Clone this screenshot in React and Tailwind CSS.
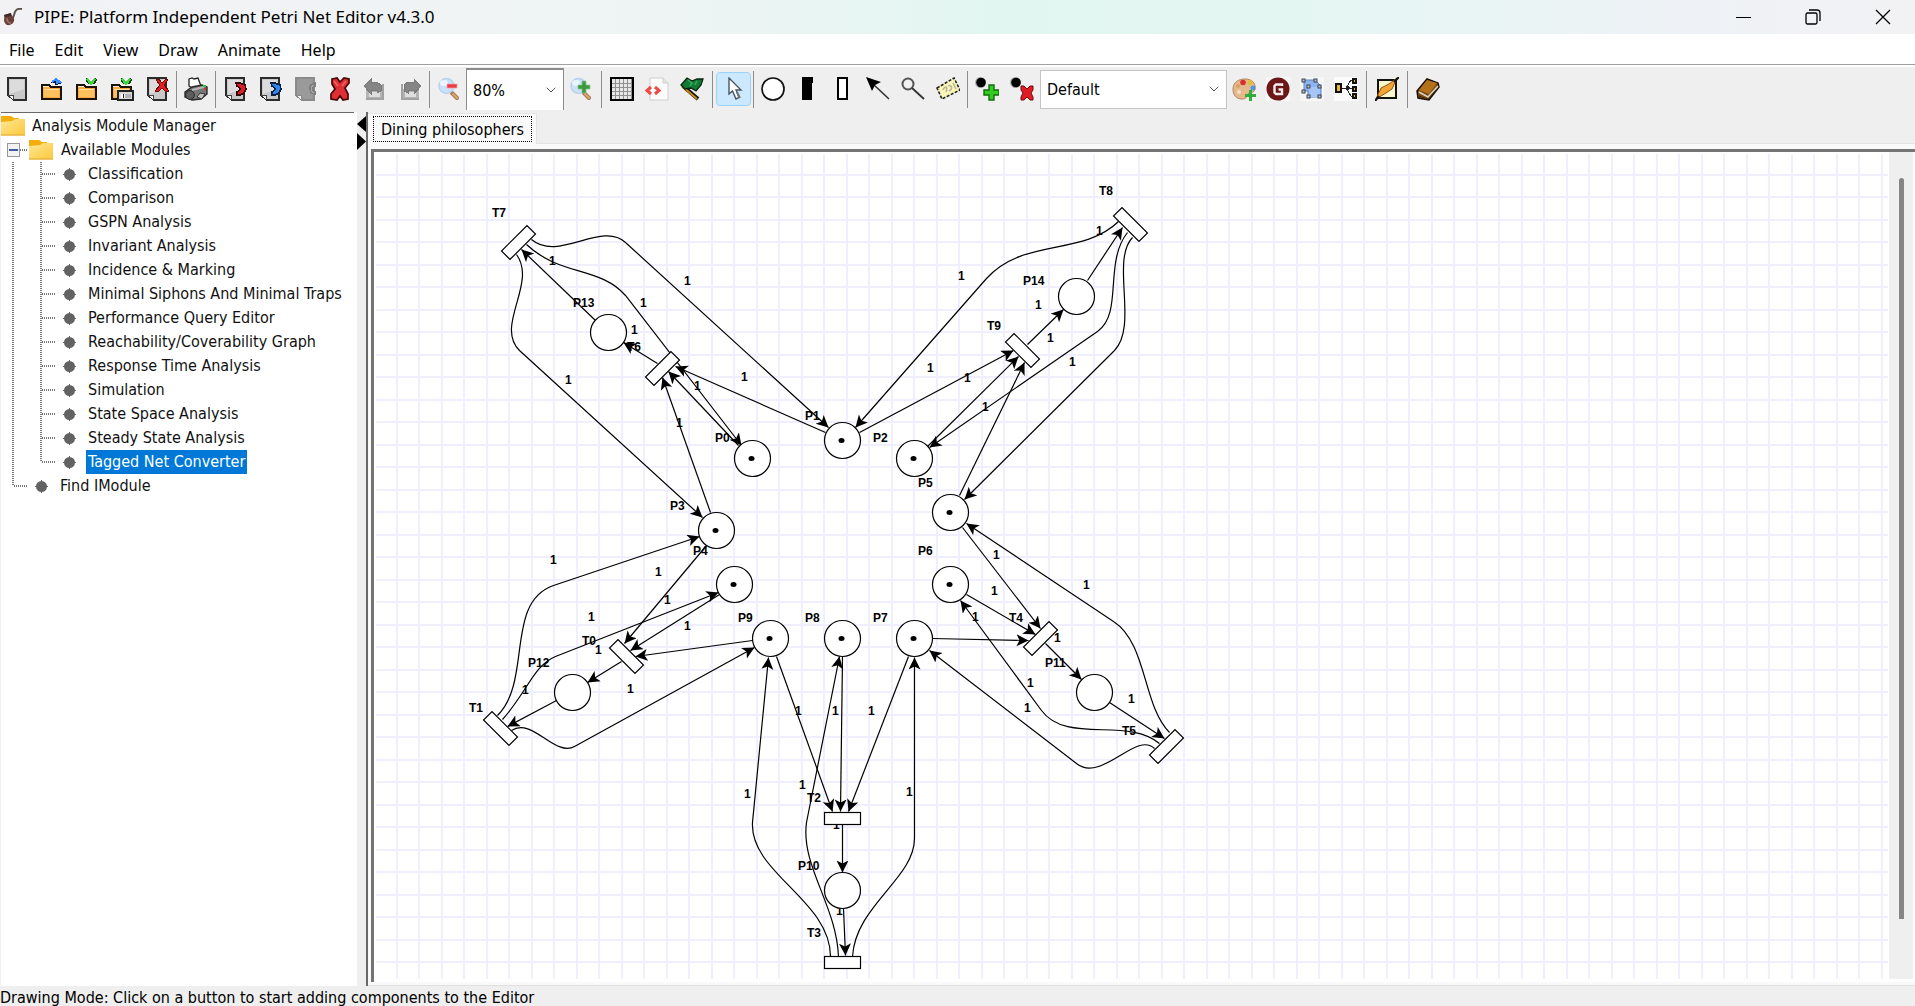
import React from "react";
import { ChevronDown } from "lucide-react";

/* ---------- toolbar icons, all on a 24 x 24 grid ---------- */

function Icon({ children, pixel }) {
  return (
    <svg viewBox="0 0 24 24" className="h-6 w-6" fill="none" shapeRendering={pixel ? "crispEdges" : "auto"} aria-hidden="true">
      {children}
    </svg>
  );
}

const Sheet = ({ disabled }) => (
  <>
    <path d="M3 1H21V23H9L3 18Z" fill={disabled ? "#9a9a9a" : "#c9c9c9"} stroke={disabled ? "#8a8a8a" : "#2c2c2c"} strokeWidth="2" />
    {!disabled && <path d="M5 3H19V12L5 17Z" fill="#dcdcdc" />}
    <path d="M3 18H8V23" fill="#f4f4f4" stroke={disabled ? "#8a8a8a" : "#444"} />
  </>
);

const Folder = () => (
  <>
    <path d="M2 22V8H9L11 10H21V22Z" fill="#f9ab3e" stroke="#1c1208" strokeWidth="2" />
    <path d="M4 12H19V20H4Z" fill="#fcc05f" />
    <path d="M3 9H8L9 10H3Z" fill="#fff3dd" />
    <path d="M4 12H19" stroke="#ffe0a8" />
  </>
);

const DownArrow = () => (
  <>
    <path d="M11 1L15 4H17L21 1L22 3L20 7H18L16 8L13 7L11 4Z" fill="#1d3c1d" />
    <path d="M12 2L15 5H17L20 2M14 5L16 7L18 5" stroke="#3ed63e" strokeWidth="1.5" />
  </>
);

const NewIcon = () => (<Icon pixel><Sheet /></Icon>);
const OpenIcon = () => (
  <Icon pixel>
    <Folder />
    <path d="M10 6L14 3L16 1L19 3L22 6L20 7H18V8H15V6Z" fill="#0c1c3c" />
    <path d="M12 5L16 2L20 5H17V7" stroke="#3a8cff" strokeWidth="2" />
  </Icon>
);
const SaveIcon = () => (<Icon pixel><Folder /><DownArrow /></Icon>);
const SaveAsIcon = () => (
  <Icon pixel>
    <Folder /><DownArrow />
    <path d="M8 14H23V23H8Z" fill="#d8d8d8" stroke="#222" strokeWidth="2" />
    <path d="M11 17H20V21H11Z" fill="#fff" />
    <path d="M13 17V21" stroke="#222" />
    <path d="M15 17H21V21H15Z" fill="#b4b4b4" />
  </Icon>
);
const CloseIcon = () => (
  <Icon pixel>
    <Sheet />
    <path d="M11 3L14 2L17 6L21 2L23 3L19 8L24 14L21 15L17 11L13 15L10 14L15 8Z" fill="#e02020" stroke="#6d0808" />
  </Icon>
);
const PrintIcon = () => (
  <Icon>
    <path d="M5 2L8 1L10 2L14 1L17 9L9 12L5 9Z" fill="#fff" stroke="#222" strokeWidth="1.3" />
    <path d="M1 15L8 10L18 8L23 10V17L17 22L8 23L1 20Z" fill="#777" stroke="#2a2a2a" strokeWidth="1.4" />
    <circle cx="6" cy="18" r="4.4" fill="#5c5c5c" stroke="#2a2a2a" />
    <path d="M8 13L20 10" stroke="#b5b5b5" strokeWidth="2" />
    <path d="M13 20L16 16L21 17L18 22Z" fill="#c2c2c2" stroke="#333" />
    <rect x="19" y="8" width="3" height="2" fill="#3fbf3f" />
    <rect x="20" y="11" width="2" height="2" fill="#d03a2a" />
  </Icon>
);
const CopyIcon = ({ color, dark }) => (
  <Icon pixel>
    <Sheet />
    <path d="M13 6H17L19 7L22 8L23 12L21 16L17 18H14V15L17 13V11L14 9Z" fill={color} stroke={dark} strokeWidth="1.4" />
  </Icon>
);
const PasteIcon = () => (
  <Icon pixel>
    <Sheet disabled />
    <path d="M23 5L17 7L16 12L18 17L23 18V14L20 12L23 9Z" fill="#7e7e7e" />
    <path d="M21 8L18 10V14L21 16" stroke="#a5a5a5" />
  </Icon>
);
const DeleteIcon = () => (
  <Icon>
    <path d="M4 2L9 1L12 5L16 1L21 2L21 6L17 11L20 17V22L15 23L12 19L9 23L3 22V17L7 12L4 7Z" fill="#dc2f36" stroke="#4c0507" strokeWidth="1.7" />
    <path d="M6 4L10 9M18 4L14 9" stroke="#f0656b" strokeWidth="1.4" />
  </Icon>
);
const Bend = () => (
  <>
    <path d="M3 12H21V23H3Z" fill="#b4b4b4" />
    <path d="M6 15H17V20H6Z" fill="#dedede" />
    <path d="M20 7V22H3" stroke="#a2a2a2" strokeWidth="1.6" />
    <path d="M1 9L8 2V5H14L18 8V14L14 16V13H8V17Z" fill="#858585" stroke="#7a7a7a" />
  </>
);
const UndoIcon = () => (<Icon pixel><Bend /></Icon>);
const RedoIcon = () => (<Icon pixel><g transform="matrix(-1 0 0 1 24 0)"><Bend /></g></Icon>);
const ZoomIcon = ({ plus }) => (
  <Icon>
    <path d="M15 16L20 21" stroke="#a5764a" strokeWidth="4" strokeLinecap="round" />
    <path d="M16 17L20 21" stroke="#d9a36c" strokeWidth="2.400" strokeLinecap="round" />
    <circle cx="9.500" cy="9" r="7.500" fill="#c9e2f8" stroke="#b6d2ee" strokeWidth="1.400" />
    <ellipse cx="7" cy="6" rx="4" ry="3" fill="#e9f5fe" />
    {plus
      ? <path d="M13 4H17V8H21V12H17V16H13V12H9V8H13Z" fill="#3c9a3c" stroke="#8cc48c" strokeWidth=".7" />
      : <path d="M10 7H20V11H10Z" fill="#ee3c46" stroke="#f5a0a4" strokeWidth=".7" />}
  </Icon>
);
const GridIcon = () => (
  <Icon pixel>
    <rect x="1" y="1" width="22" height="22" fill="#e8e8e8" stroke="#000" strokeWidth="2" />
    <path d="M5 2V22M9 2V22M13 2V22M17 2V22M21 2V22M2 6H22M2 10H22M2 14H22M2 18H22" stroke="#8f8f8f" />
  </Icon>
);
const CodeIcon = () => (
  <Icon>
    <path d="M5 1H18L23 6V23H5Z" fill="#fbfbfb" stroke="#cfcfcf" />
    <path d="M18 1V6H23" fill="#e5e5e5" stroke="#cfcfcf" />
    <path d="M6 10L2 13.500L6 17M10 10L14 13.500L10 17" stroke="#ee4a42" strokeWidth="3" />
  </Icon>
);
const FlagIcon = () => (
  <Icon>
    <path d="M3 9L18 22" stroke="#1a1205" strokeWidth="4" />
    <path d="M2 9L17 22" stroke="#c98a1d" strokeWidth="1.800" />
    <path d="M1 8L7 1L12 4L17 2L23 2L21 8L16 14L11 11L5 12Z" fill="#137a35" stroke="#08260f" strokeWidth="1.300" />
    <path d="M8 3L12 6L10 9M17 4L15 8" stroke="#35ad5b" strokeWidth="1.500" />
  </Icon>
);
const PointerIcon = () => (
  <Icon>
    <path d="M7 1V17L10.500 14L14 22L17 20.500L14 13H19Z" fill="#fff" stroke="#4a5560" strokeWidth="1.400" />
    <path d="M15 15L18 21" stroke="#6d7780" strokeWidth="2" />
  </Icon>
);
const PlaceIcon = () => (<Icon><circle cx="12" cy="12" r="11" fill="#fff" stroke="#111" strokeWidth="1.700" /></Icon>);
const TimedIcon = () => (<Icon pixel><path d="M6 0H17V6H16V23H6Z" fill="#000" /></Icon>);
const ImmediateIcon = () => (<Icon pixel><path d="M7 1H16V22H7Z" fill="#fff" stroke="#000" strokeWidth="2" /></Icon>);
const ArcIcon = () => (<Icon><path d="M7 7L23 22" stroke="#333" strokeWidth="1.600" /><path d="M0 0L15 5L9 8L6 14Z" fill="#000" /></Icon>);
const InhibitorIcon = () => (<Icon><circle cx="7" cy="7" r="5.500" fill="#f2f2f2" stroke="#555" strokeWidth="2" /><path d="M11 11L23 22" stroke="#333" strokeWidth="1.800" /></Icon>);
const NoteIcon = () => (
  <Icon>
    <path d="M1 11L18 1L24 13L6 22Z" fill="#fbf7b8" stroke="#222" strokeWidth="1.600" strokeDasharray="3 1.500" />
    <path d="M7 13C9 8 12 10 10 15M12 9C16 7 17 12 13 14M17 6L20 12" stroke="#b9b59a" strokeWidth="1.600" />
  </Icon>
);
const TokenIcon = ({ remove }) => (
  <Icon>
    <circle cx="5.500" cy="5.500" r="5.500" fill="#b0b0b0" /><circle cx="6" cy="5.500" r="4.800" fill="#000" />
    {remove
      ? <path d="M11 9L14 9L17 12L20 9H23V13L21 16L23 20V23H20L17 20L14 23H11V20L13 16L11 13Z" fill="#e01c24" stroke="#76080c" />
      : <path d="M14 8H19V13H24V18H19V23H14V18H9V13H14Z" fill="#35cc22" stroke="#136d0c" strokeWidth="1.400" />}
  </Icon>
);
const PaletteIcon = () => (
  <Icon>
    <path d="M1 12C1 5 7 2 13 2C20 2 24 6 23 12C22 17 18 14 16 17C14 20 15 22 10 22C4 22 1 18 1 12Z" fill="#e6b98c" stroke="#b58558" />
    <circle cx="11" cy="5.500" r="2.800" fill="#d6302c" /><circle cx="18" cy="5.500" r="2.500" fill="#d9c23a" />
    <circle cx="21" cy="11" r="2.500" fill="#4f97dc" /><circle cx="6" cy="9" r="2" fill="#d89f6c" /><circle cx="7" cy="15" r="2" fill="#f5dfc6" />
    <path d="M17 13H20V17H24V20H20V24H17V20H13V17H17Z" fill="#2fae3c" />
  </Icon>
);
const GroupIcon = () => (
  <Icon>
    <rect width="24" height="24" fill="#f7f7f7" />
    <circle cx="12" cy="12" r="11.500" fill="#6b1717" />
    <path d="M16 9V7.500H10L8.500 9V15.500L10 17H16V12.500H12.500" stroke="#f7eded" strokeWidth="2.400" />
  </Icon>
);
const SelectionIcon = () => (
  <Icon>
    <rect width="24" height="24" fill="#f6f6f6" />
    <path d="M4 3H15L21 9V20H8V14H4Z" fill="#8db4f0" stroke="#5f87c8" />
    <path d="M9 10H20V20H9Z" fill="#a6c6f7" />
    <g fill="#b9c0c9" stroke="#3b434d"><rect x="2" y="2" width="3" height="3" /><rect x="14" y="2" width="3" height="3" /><rect x="2" y="13" width="3" height="3" /><rect x="7" y="8" width="3" height="3" /><rect x="18" y="8" width="3" height="3" /><rect x="7" y="18" width="3" height="3" /><rect x="18" y="18" width="3" height="3" /></g>
  </Icon>
);
const HierarchyIcon = () => (
  <Icon pixel>
    <rect width="24" height="24" fill="#fbfbfb" />
    <path d="M7 11H14M19 3H17L12 11L17 19H19M14 11H19" stroke="#222" />
    <path d="M13 8L17 11L13 14Z" fill="#222" />
    <g fill="#f5b534" stroke="#111" strokeWidth="1.500"><rect x="2" y="7" width="5" height="8" /><rect x="19" y="2" width="3" height="4" /><rect x="19" y="10" width="3" height="4" /><rect x="19" y="17" width="3" height="4" /></g>
  </Icon>
);
const AnimateIcon = () => (
  <Icon>
    <rect x="3" y="3" width="18" height="18" fill="#fbf6cf" stroke="#111" strokeWidth="2" />
    <path d="M1 22L6 11L14 7L22 1L17 12L11 16Z" fill="#f3a233" stroke="#8d5710" />
    <path d="M0 24L4 19M19 5L24 0" stroke="#111" strokeWidth="2.200" />
  </Icon>
);
const BookIcon = () => (
  <Icon>
    <path d="M1 14L11 2L22 6L23 10L13 23L2 21Z" fill="#7d4a10" stroke="#1c1004" strokeWidth="1.500" />
    <path d="M3 13L11 3L21 6L13 17Z" fill="#b5701a" />
    <path d="M3 15L12 20L22 9" stroke="#d9d4ca" strokeWidth="1.600" />
    <path d="M3 19L12 22L22 11" stroke="#3a2a14" />
  </Icon>
);

/* ---------- toolbar ---------- */

function Tool({ label, active, children }) {
  return (
    <button
      type="button"
      aria-label={label}
      title={label}
      className={
        active
          ? "flex h-[34px] w-[35px] shrink-0 items-center justify-center rounded-sm border border-[#99d1ff] bg-[#cce8ff]"
          : "flex h-[34px] w-[34px] shrink-0 items-center justify-center"
      }
    >
      {children}
    </button>
  );
}

const Group = ({ children }) => <div className="flex shrink-0 items-center gap-px">{children}</div>;
const Sep = ({ wide }) => (
  <div className={wide ? "mx-[3px] h-[37px] w-px shrink-0 bg-[#8c8c8c]" : "mx-0.5 h-[37px] w-px shrink-0 bg-[#8c8c8c]"} />
);

function Combo({ label, value, className }) {
  return (
    <label className={className}>
      <select aria-label={label} className="h-full w-full appearance-none bg-transparent pt-0.5 pl-1.5 text-base outline-none" defaultValue={value}>
        <option>{value}</option>
      </select>
      <ChevronDown className="pointer-events-none -ml-5 h-4 w-4 shrink-0 text-[#555]" strokeWidth={1.5} />
    </label>
  );
}

function Toolbar() {
  return (
    <div className="flex h-[45px] shrink-0 items-center pb-px">
      <Group>
        <Tool label="New"><NewIcon /></Tool>
        <Tool label="Open"><OpenIcon /></Tool>
        <Tool label="Save"><SaveIcon /></Tool>
        <Tool label="Save as"><SaveAsIcon /></Tool>
        <Tool label="Close"><CloseIcon /></Tool>
      </Group>
      <Sep />
      <Tool label="Print"><PrintIcon /></Tool>
      <Sep />
      <Group>
        <Tool label="Cut"><CopyIcon color="#d91f26" dark="#3a0507" /></Tool>
        <Tool label="Copy"><CopyIcon color="#2f86ee" dark="#0a1f44" /></Tool>
        <Tool label="Paste"><PasteIcon /></Tool>
        <Tool label="Delete"><DeleteIcon /></Tool>
        <Tool label="Undo"><UndoIcon /></Tool>
        <Tool label="Redo"><RedoIcon /></Tool>
      </Group>
      <Sep />
      <Tool label="Zoom out"><ZoomIcon /></Tool>
      <Combo label="Zoom" value="80%" className="flex h-[42px] w-[98px] shrink-0 items-center border border-t-2 border-b-0 border-[#8c8c8c] bg-white" />
      <Tool label="Zoom in"><ZoomIcon plus /></Tool>
      <Sep wide />
      <Group>
        <Tool label="Toggle grid"><GridIcon /></Tool>
        <Tool label="Export"><CodeIcon /></Tool>
        <Tool label="Animation mode"><FlagIcon /></Tool>
      </Group>
      <Sep wide />
      <Tool label="Select" active><PointerIcon /></Tool>
      <Sep />
      <Group>
        <Tool label="Place"><PlaceIcon /></Tool>
        <Tool label="Timed transition"><TimedIcon /></Tool>
        <Tool label="Immediate transition"><ImmediateIcon /></Tool>
        <Tool label="Arc"><ArcIcon /></Tool>
        <Tool label="Inhibitor arc"><InhibitorIcon /></Tool>
        <Tool label="Annotation"><NoteIcon /></Tool>
      </Group>
      <Sep />
      <Group>
        <Tool label="Add token"><TokenIcon /></Tool>
        <Tool label="Delete token"><TokenIcon remove /></Tool>
        <Combo label="Token class" value="Default" className="flex h-[39px] w-[187px] shrink-0 items-center border border-[#c4c4c4] bg-white" />
      </Group>
      <div className="flex shrink-0">
        <Tool label="Specify tokens"><PaletteIcon /></Tool>
        <Tool label="Group transitions"><GroupIcon /></Tool>
        <Tool label="Unfold"><SelectionIcon /></Tool>
        <Tool label="Hierarchy"><HierarchyIcon /></Tool>
      </div>
      <Sep wide />
      <Tool label="Rate editor"><AnimateIcon /></Tool>
      <Sep wide />
      <Tool label="Help"><BookIcon /></Tool>
    </div>
  );
}

/* ---------- module tree ---------- */

const modules = [
  "Classification", "Comparison", "GSPN Analysis", "Invariant Analysis", "Incidence & Marking",
  "Minimal Siphons And Minimal Traps", "Performance Query Editor", "Reachability/Coverability Graph",
  "Response Time Analysis", "Simulation", "State Space Analysis", "Steady State Analysis", "Tagged Net Converter",
];

const VLine = ({ half }) => (
  <span className={half
    ? "h-3 w-0.5 shrink-0 self-start bg-[repeating-linear-gradient(180deg,#777_0_1px,transparent_1px_2px)]"
    : "h-6 w-0.5 shrink-0 bg-[repeating-linear-gradient(180deg,#777_0_1px,transparent_1px_2px)]"} />
);
const HLine = ({ short }) => (
  <span className={short
    ? "h-0.5 w-2 shrink-0 bg-[repeating-linear-gradient(90deg,#777_0_1px,transparent_1px_2px)]"
    : "h-0.5 w-3.5 shrink-0 bg-[repeating-linear-gradient(90deg,#777_0_1px,transparent_1px_2px)]"} />
);
const FolderIcon = () => (
  <svg viewBox="0 0 24 20" className="h-5 w-6 shrink-0" aria-hidden="true">
    <defs>
      <linearGradient id="folder" x1="0" y1="0" x2="1" y2="1">
        <stop offset="0" stopColor="#ffe694" /><stop offset="1" stopColor="#fbc93d" />
      </linearGradient>
    </defs>
    <path d="M0 0H10L13 2H18V8H0Z" fill="#f4ad0b" />
    <path d="M0 6L11 5L14 3H24V19H0Z" fill="url(#folder)" />
    <path d="M0 19H24" stroke="#eab53b" strokeWidth="1.500" />
  </svg>
);
const Bullet = () => (
  <svg viewBox="0 0 13 13" className="h-[13px] w-[13px] shrink-0" aria-hidden="true">
    <circle cx="6.500" cy="6.500" r="5.500" fill="#626262" /><path d="M6 0H7V13H6ZM0 6H13V7H0Z" fill="#626262" />
  </svg>
);

function ModuleTree() {
  return (
    <nav aria-label="Modules" className="w-[357px] shrink-0 border-l border-[#efefef] bg-white">
      <div className="mr-[3px] border-t border-[#696969]" />
      <ul className="pt-px text-base leading-6 whitespace-nowrap text-[#111]">
        <li className="flex h-6 items-center"><FolderIcon /><span className="ml-[7px]">Analysis Module Manager</span></li>
        <li>
          <div className="flex h-6 items-center pl-1.5">
            <button type="button" aria-label="Collapse Available Modules" className="flex h-3.5 w-[13px] items-center justify-center border border-[#999] bg-[#f3f3f3]">
              <span className="h-0.5 w-[9px] bg-[#3f5ba9]" />
            </button>
            <HLine short />
            <span className="ml-px flex items-center"><FolderIcon /><span className="ml-2">Available Modules</span></span>
          </div>
          <ul>
            {modules.map((name, i) => {
              const last = i === modules.length - 1;
              return (
                <li key={name} className="flex h-6 items-center pl-[11px]">
                  <VLine />
                  <span className="w-[26px] shrink-0" />
                  <VLine half={last} />
                  <HLine />
                  <span className="ml-[7px] flex items-center">
                    <Bullet />
                    <a href="#module" className={last ? "ml-2.5 bg-[#0078d7] px-0.5 text-white" : "ml-2.5 px-0.5"}>{name}</a>
                  </span>
                </li>
              );
            })}
          </ul>
        </li>
        <li className="flex h-6 items-center pl-[11px]">
          <VLine half /><HLine />
          <span className="ml-[7px] flex items-center"><Bullet /><a href="#find" className="ml-2.5 px-0.5">Find IModule</a></span>
        </li>
      </ul>
    </nav>
  );
}

/* ---------- Petri net ---------- */

const places = [
  ["P0", 752, 458, 715, 442, 1], ["P1", 842, 440, 805, 420, 1], ["P2", 914, 458, 873, 442, 1],
  ["P3", 716, 530, 670, 510, 1], ["P4", 734, 584, 693, 555, 1], ["P5", 950, 512, 918, 487, 1],
  ["P6", 950, 584, 918, 555, 1], ["P7", 914, 638, 873, 622, 1], ["P8", 842, 638, 805, 622, 1],
  ["P9", 770, 638, 738, 622, 1], ["P10", 842, 890, 798, 870, 0], ["P11", 1094, 692, 1045, 667, 0],
  ["P12", 572, 692, 528, 667, 0], ["P13", 608, 332, 573, 307, 0], ["P14", 1076, 296, 1023, 285, 0],
];

const transitions = [
  ["T0", 626, 656, 45, 582, 645], ["T1", 500, 728, 45, 469, 712], ["T2", 842, 818, 0, 807, 802],
  ["T3", 842, 962, 0, 807, 937], ["T4", 1040, 638, -45, 1009, 622], ["T5", 1166, 746, -45, 1122, 735],
  ["T6", 662, 368, -45, 627, 351], ["T7", 518, 242, -45, 492, 217], ["T8", 1130, 224, 45, 1099, 195],
  ["T9", 1022, 350, 45, 987, 330],
];

const weights = [
  [549, 265], [684, 285], [640, 307], [631, 334], [565, 384], [741, 381], [694, 390], [676, 427],
  [1096, 235], [958, 280], [1035, 309], [1047, 342], [1069, 366], [927, 372], [964, 382], [982, 411], [993, 559],
  [550, 564], [655, 576], [664, 604], [588, 621], [684, 630], [595, 654], [627, 693], [522, 694],
  [795, 715], [832, 715], [868, 715], [1083, 589], [991, 595], [972, 621], [1054, 642], [1027, 687],
  [1024, 712], [1128, 703], [744, 798], [799, 789], [906, 796], [833, 829], [836, 915],
];

const arcs = [
  "M595 320L521 249", "M657 363L623 342", "M825 432L675 366", "M738 445L668 371", "M710 512L662 377",
  "M526 244C560 276 600 266 625 295L741 445",
  "M531 239C558 262 601 220 625 242L828 427",
  "M516 254C537 283 494 325 519 350L702 517",
  "M1118 221C1082 256 1023 237 986 278L855 427",
  "M859 432L1013 350", "M927 446L1018 356", "M959 495L1024 362", "M1027 344L1063 309", "M1087 280L1122 227",
  "M1127 232C1103 262 1123 313 1097 331L929 447",
  "M1132 237C1110 260 1138 325 1114 350L964 499",
  "M962 527L1040 628",
  "M1169 732C1142 705 1147 643 1113 621L966 523",
  "M966 594L1035 634", "M932 638L1028 640",
  "M1159 743C1127 716 1066 744 1041 710L960 600",
  "M1154 748C1136 730 1101 783 1076 763L929 650",
  "M1045 643L1081 679", "M1109 702L1164 738", "M706 545L624 643", "M719 594L630 650", "M752 640L635 656",
  "M621 661L587 682", "M556 700L507 726",
  "M497 715C532 680 504 602 553 585L699 536",
  "M502 719C527 691 533 665 555 656L718 592",
  "M511 730C531 716 555 757 574 746L754 647",
  "M776 656L832 811", "M842 656L840 811", "M908 656L848 811", "M842 824L842 872", "M843 908L845 955",
  "M830 956C830 900 749 872 752 822L768 657",
  "M838 956C836 905 800 865 806 822L839 656",
  "M852 956C855 905 914 878 914 838L914 657",
];

function PetriNet() {
  return (
    <svg className="block h-full w-full" fontFamily="'Liberation Sans', Arial, sans-serif" fontSize="12" fontWeight="700" role="img" aria-label="Dining philosophers Petri net">
      <defs>
        <pattern id="grid" x="20" y="20" width="45" height="45" patternUnits="userSpaceOnUse">
          <path d="M0 0H45V2H0ZM0 22H45V24H0ZM0 0H2V45H0ZM22 0H24V45H22Z" fill="#efefff" />
        </pattern>
        <marker id="arrow" markerUnits="userSpaceOnUse" markerWidth="14" markerHeight="14" refX="12" refY="6" orient="auto">
          <path d="M12 6L0 0L3 6L0 12Z" fill="#000" />
        </marker>
      </defs>
      <rect width="100%" height="100%" fill="url(#grid)" shapeRendering="crispEdges" />
      <g transform="translate(-376 -154)">
        {places.map(([id, , , x, y]) => <text key={id} x={x} y={y}>{id}</text>)}
        {transitions.map(([id, , , , x, y]) => <text key={id} x={x} y={y}>{id}</text>)}
        {weights.map(([x, y]) => <text key={x + "-" + y} x={x} y={y}>1</text>)}
      </g>
      <g transform="translate(-375.5 -153.5)" stroke="#000" strokeWidth="1.2">
        {arcs.map((d) => <path key={d} d={d} fill="none" markerEnd="url(#arrow)" />)}
        {places.map(([id, x, y, , , token]) => (
          <g key={id}>
            <circle cx={x} cy={y} r="18" fill="#fff" />
            {token === 1 && <ellipse cx={x - 1} cy={y} rx="3" ry="2.500" fill="#000" stroke="none" />}
          </g>
        ))}
        {transitions.map(([id, x, y, angle]) => (
          <rect key={id} x={x - 18} y={y - 6} width="36" height="12" fill="#fff" transform={`rotate(${angle} ${x} ${y})`} />
        ))}
      </g>
    </svg>
  );
}

/* ---------- window ---------- */

function TitleBar() {
  return (
    <header className="flex h-[34px] shrink-0 items-center bg-[linear-gradient(90deg,#f2f2f5_0%,#eef4f4_35%,#e2f6f1_52%,#e4f6f2_68%,#eef2f6_88%,#f2f2f4_100%)] font-['Noto_Sans',sans-serif]">
      <svg viewBox="0 0 20 18" className="ml-[3px] h-[18px] w-5 shrink-0" aria-hidden="true">
        <path d="M19 1C14 0 12 2 11 7C10 11 8 12 8 13" stroke="#5c5350" strokeWidth="2" fill="none" />
        <path d="M1 7L8 5C9 9 12 10 11 13C10 17 4 19 2 15C0 12 2 10 1 7Z" fill="#6b4038" />
        <path d="M1 7L8 5L8 8L2 9Z" fill="#3a2c29" /><path d="M4 10C4 13 5 15 8 15" stroke="#9c746b" strokeWidth="1.500" fill="none" />
      </svg>
      <h1 className="ml-[11px] grow text-[17px] leading-6">PIPE: Platform Independent Petri Net Editor v4.3.0</h1>
      <button type="button" aria-label="Minimize" className="flex h-full w-16 items-center justify-center">
        <span className="h-px w-[15px] bg-black" />
      </button>
      <button type="button" aria-label="Restore" className="flex h-full w-[76px] items-center justify-center">
        <svg viewBox="0 0 16 16" className="h-4 w-4" fill="none" stroke="#000" strokeWidth="1.300" aria-hidden="true">
          <rect x="1" y="4" width="11" height="11" rx="1.500" /><path d="M4 1H12Q15 1 15 4V12" />
        </svg>
      </button>
      <button type="button" aria-label="Close window" className="flex h-full w-16 items-center justify-center">
        <svg viewBox="0 0 16 16" className="h-4 w-4" fill="none" stroke="#000" strokeWidth="1.300" aria-hidden="true"><path d="M1 1L15 15M15 1L1 15" /></svg>
      </button>
    </header>
  );
}

export default function App() {
  return (
    <div className="flex h-screen flex-col overflow-hidden bg-[#efefef] font-['DejaVu_Sans_Condensed','Noto_Sans',sans-serif] text-black">
      <TitleBar />
      <nav aria-label="Menu" className="flex h-[30px] shrink-0 items-center bg-white pt-0.5 font-['Noto_Sans',sans-serif] text-base">
        {["File", "Edit", "View", "Draw", "Animate", "Help"].map((m) => (
          <button key={m} type="button" className="pr-[11px] pl-[9px]">{m}</button>
        ))}
      </nav>
      <div className="h-[3px] shrink-0 border-t border-[#a0a0a0] bg-white" />
      <Toolbar />
      <div className="flex min-h-0 grow">
        <ModuleTree />
        <div className="flex w-[11px] shrink-0 flex-col items-end border-r-2 border-[#696969] pt-1">
          <button type="button" aria-label="Collapse modules">
            <svg viewBox="0 0 9 17" className="h-[17px] w-[9px]" aria-hidden="true"><path d="M9 0V16L0 8Z" /></svg>
          </button>
          <button type="button" aria-label="Expand modules">
            <svg viewBox="0 0 9 17" className="h-[17px] w-[9px]" aria-hidden="true"><path d="M0 0V17L9 8.500Z" /></svg>
          </button>
        </div>
        <main className="flex min-w-0 grow flex-col">
          <div className="flex h-8 shrink-0 items-end border-b border-[#e3e3e3]" role="tablist">
            <button type="button" role="tab" aria-selected="true" className="-mb-px flex h-[31px] items-center border-t border-r border-[#e3e3e3] bg-[#f9f9f9] pr-1 pl-[5px]">
              <span className="border border-dotted border-black px-[7px] pt-0.5 text-base leading-[22px]">Dining philosophers</span>
            </button>
          </div>
          <div className="flex min-h-0 grow flex-col border-b border-[#e0e0e0] bg-[#f9f9f9] pt-[5px] pb-[3px] pl-[3px]">
            <div className="flex min-h-0 grow border-t-[3px] border-l-[3px] border-[#747474] bg-white">
              <div className="min-w-0 grow overflow-hidden pt-0.5 pr-px pb-[3px] pl-0.5">
                <PetriNet />
              </div>
              <div className="mr-0.5 mb-[3px] flex w-6 shrink-0 justify-center bg-[#efefef] pt-[26px] pb-[60px]">
                <div className="w-[5px] rounded-t-full bg-[#858585]" />
              </div>
            </div>
          </div>
        </main>
      </div>
      <footer className="h-5 shrink-0 pt-0.5 text-base leading-5">Drawing Mode: Click on a button to start adding components to the Editor</footer>
    </div>
  );
}
